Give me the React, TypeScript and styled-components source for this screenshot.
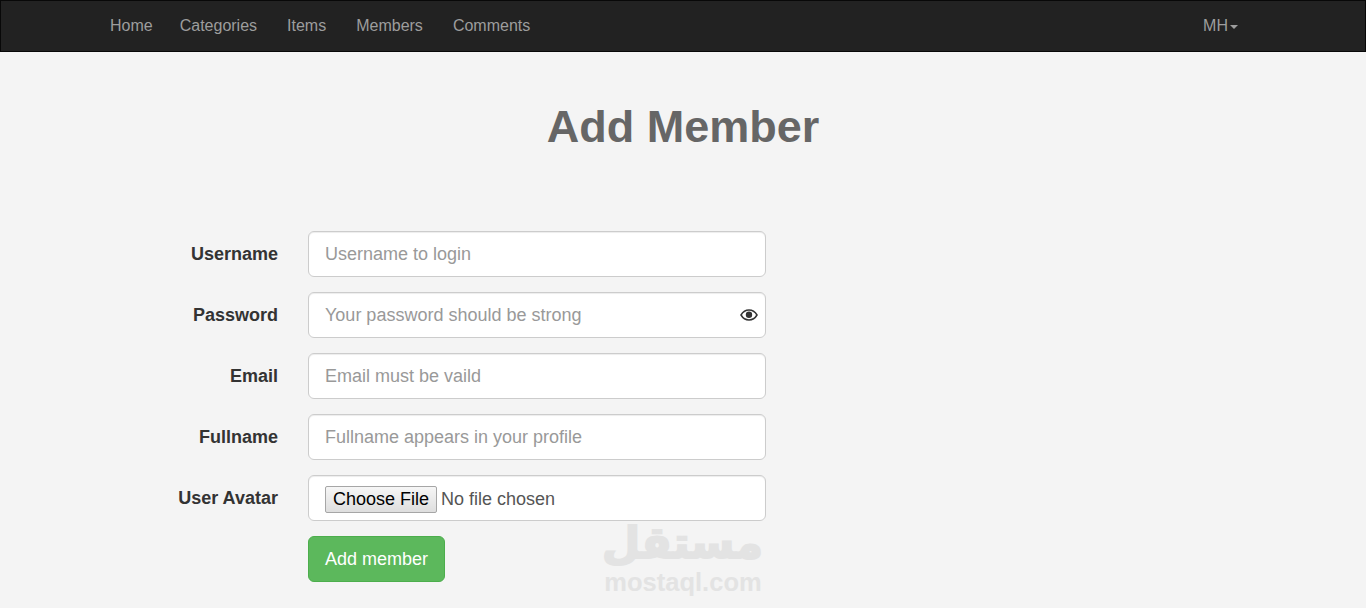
import React from "react";
import styled, { createGlobalStyle } from "styled-components";

const Global = createGlobalStyle`
  * { box-sizing: border-box; }
  html, body { margin: 0; height: 100%; overflow: hidden; }
  body {
    background: #f4f4f4;
    color: #333;
    font-family: "Liberation Sans", Arial, sans-serif;
    font-size: 14px;
  }
`;

const Navbar = styled.nav`
  height: 52px;
  background: #222;
  border: 1px solid #080808;
`;

const NavInner = styled.div`
  width: 1170px;
  margin: 0 auto;
  padding: 0 29px 0 13px;
  height: 50px;
  display: flex;
  align-items: center;
  justify-content: space-between;
  position: relative;
  left: -1px;
`;

const NavList = styled.div`
  display: flex;
  gap: 30px;
  & > a:first-child { margin-right: -3px; }
`;

const NavLink = styled.a`
  color: #9d9d9d;
  font-size: 16px;
  line-height: 22px;
  text-decoration: none;
`;

const Caret = styled.span`
  display: inline-block;
  width: 0;
  height: 0;
  margin-left: 2px;
  vertical-align: middle;
  border-top: 4px solid #9d9d9d;
  border-left: 4px solid transparent;
  border-right: 4px solid transparent;
`;

const Title = styled.h1`
  margin: 48px 0 0;
  text-align: center;
  font-size: 45px;
  line-height: 54px;
  font-weight: 700;
  color: #666;
`;

const Form = styled.form`
  width: 1170px;
  margin: 77px auto 0;
  display: flex;
  flex-direction: column;
  gap: 15px;
`;

const Row = styled.div`
  display: grid;
  grid-template-columns: 180px 458px;
  column-gap: 30px;
  height: 46px;
`;

const Label = styled.label`
  text-align: right;
  font-size: 18px;
  font-weight: 700;
  line-height: 24px;
  padding-top: 11px;
  color: #333;
`;

const Field = styled.div`
  position: relative;
  grid-column: 2;
`;

const Input = styled.input`
  display: block;
  width: 100%;
  height: 46px;
  padding: 10px 16px;
  font: 18px/1.33 "Liberation Sans", Arial, sans-serif;
  color: #555;
  background: #fff;
  border: 1px solid #ccc;
  border-radius: 6px;
  box-shadow: inset 0 1px 1px rgba(0, 0, 0, 0.075);
  &::placeholder { color: #999; opacity: 1; }
  &::file-selector-button {
    background: linear-gradient(#f6f6f6, #dedede);
    border: 1px solid #a6a6a6;
    border-radius: 2px;
    padding: 2px 7px;
  }
`;

const EyeIcon = styled.svg`
  position: absolute;
  right: 8px;
  top: 15px;
  width: 18px;
  height: 16px;
`;

const Submit = styled.button`
  height: 46px;
  width: 137px;
  padding: 0;
  font: 18px "Liberation Sans", Arial, sans-serif;
  color: #fff;
  background: #5cb85c;
  border: 1px solid #4cae4c;
  border-radius: 6px;
`;

const Watermark = styled.div`
  position: absolute;
  left: 603px;
  top: 517px;
  width: 160px;
  text-align: center;
  color: #e3e3e3;
  font-weight: 700;
  pointer-events: none;
`;

const WatermarkArabic = styled.div`
  font-family: "DejaVu Sans", sans-serif;
  font-size: 44px;
  line-height: 52px;
  height: 52px;
  white-space: nowrap;
  -webkit-text-stroke: 2px #e3e3e3;
`;

const WatermarkLatin = styled.div`
  font-family: "Liberation Sans", Arial, sans-serif;
  font-size: 25.5px;
  line-height: 26px;
`;

const navItems = ["Home", "Categories", "Items", "Members", "Comments"];
const fields = [
  { label: "Username", placeholder: "Username to login", type: "text" },
  { label: "Password", placeholder: "Your password should be strong", type: "password", eye: true },
  { label: "Email", placeholder: "Email must be vaild", type: "email" },
  { label: "Fullname", placeholder: "Fullname appears in your profile", type: "text" },
];

export default function App() {
  return (
    <>
      <Global />
      <Navbar>
        <NavInner>
          <NavList>
            {navItems.map((n) => (
              <NavLink key={n} href="#">{n}</NavLink>
            ))}
          </NavList>
          <NavLink href="#">MH<Caret /></NavLink>
        </NavInner>
      </Navbar>
      <Title>Add Member</Title>
      <Form>
        {fields.map((f) => (
          <Row key={f.label}>
            <Label>{f.label}</Label>
            <Field>
              <Input type={f.type} placeholder={f.placeholder} />
              {f.eye && (
                <EyeIcon viewBox="0 0 18 16" fill="none">
                  <path d="M1 8c2-3.400 4.800-5 8-5s6 1.600 8 5c-2 3.400-4.800 5-8 5s-6-1.600-8-5z" stroke="#333" strokeWidth="1.5" />
                  <circle cx="9" cy="7.800" r="3.200" fill="#333" />
                </EyeIcon>
              )}
            </Field>
          </Row>
        ))}
        <Row>
          <Label>User Avatar</Label>
          <Field>
            <Input type="file" />
          </Field>
        </Row>
        <Row>
          <Field>
            <Submit type="button">Add member</Submit>
          </Field>
        </Row>
      </Form>
      <Watermark>
        <WatermarkArabic dir="rtl">مستقل</WatermarkArabic>
        <WatermarkLatin>mostaql.com</WatermarkLatin>
      </Watermark>
    </>
  );
}
